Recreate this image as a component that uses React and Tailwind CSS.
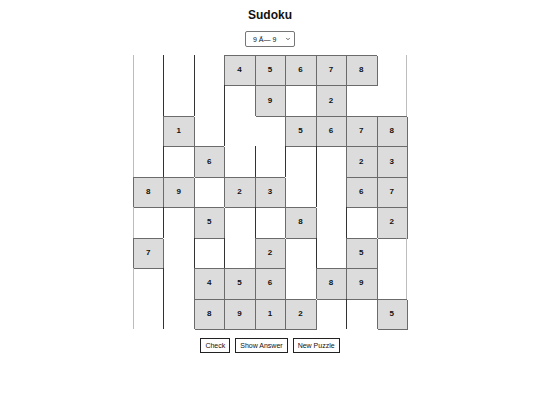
import { useState } from "react";
import { ChevronDown } from "lucide-react";

const puzzle = [
  "000456780",
  "000090200",
  "010005678",
  "006000023",
  "890230067",
  "005008002",
  "700020050",
  "004560890",
  "008912005",
];

// spots where the empty cell has no divider on its left
const noLine = ["2-4", "1-8"];

function cellClass(r, c, filled, leftFilled) {
  if (filled) {
    return "bg-[#dcdcdc] shadow-[1px_1px_0_0_#6b6b6b,inset_1px_1px_0_0_#6b6b6b]";
  }
  const hasLeft = !leftFilled && !noLine.includes(`${r}-${c}`);
  if (c === 0) return "shadow-[inset_1px_0_0_0_#bdbdbd]";
  if (c === 8) {
    return hasLeft
      ? "shadow-[inset_1px_0_0_0_#333,inset_-1px_0_0_0_#bdbdbd]"
      : "shadow-[inset_-1px_0_0_0_#bdbdbd]";
  }
  return hasLeft ? "shadow-[inset_1px_0_0_0_#333]" : "";
}

export default function App() {
  const [size, setSize] = useState("9");

  return (
    <div className="min-h-screen bg-white text-[#111] font-['Liberation_Sans',Arial,sans-serif] flex flex-col items-center">
      <h1 className="text-[12px] font-bold mt-[8px] leading-[14px]">Sudoku</h1>

      <div className="relative mt-[9px] w-[50px] h-[16px]">
        <select
          value={size}
          onChange={(e) => setSize(e.target.value)}
          className="block appearance-none w-full h-full border border-[#767676] rounded-[2px] bg-white text-[#111] text-[7px] pl-[7px] leading-none"
        >
          <option value="9">9 Ã— 9</option>
        </select>
        <ChevronDown
          className="absolute right-[4px] top-[5px] w-[6px] h-[6px] pointer-events-none text-[#333]"
          strokeWidth={3}
        />
      </div>

      <div className="mt-[8px] w-[274px] h-[274px] grid grid-cols-9 grid-rows-9">
        {puzzle.map((row, r) =>
          row.split("").map((ch, c) => {
            const filled = ch !== "0";
            const leftFilled = c > 0 && row[c - 1] !== "0";
            return (
              <div
                key={`${r}-${c}`}
                className={`flex items-center justify-center text-[8px] font-bold ${cellClass(r, c, filled, leftFilled)}`}
              >
                {filled ? ch : ""}
              </div>
            );
          })
        )}
      </div>

      <div className="mt-[9px] flex gap-[5px]">
        <button className="h-[15px] px-[4px] border border-[#222] bg-white text-[7px] leading-none">
          Check
        </button>
        <button className="h-[15px] px-[4px] border border-[#222] bg-white text-[7px] leading-none">
          Show Answer
        </button>
        <button className="h-[15px] px-[4px] border border-[#222] bg-white text-[7px] leading-none">
          New Puzzle
        </button>
      </div>
    </div>
  );
}
